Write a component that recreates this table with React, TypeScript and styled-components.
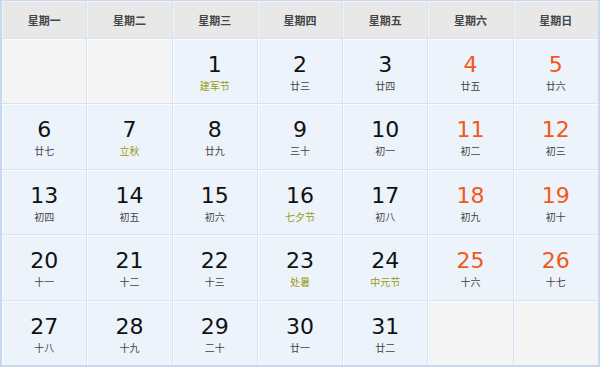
import React from "react";
import styled, { createGlobalStyle } from "styled-components";

const Global = createGlobalStyle`
  html, body { margin: 0; padding: 0; background: #fff; }
  body { font-family: "DejaVu Sans", "Noto Sans CJK SC", sans-serif; }
`;

const Frame = styled.div`
  width: 600px;
  height: 367px;
  box-sizing: border-box;
  border: 2px solid #c6d9f1;
  border-top-width: 1px;
  display: grid;
  grid-template-columns: repeat(7, 1fr);
  grid-template-rows: 37px repeat(5, 1fr);
  background: #d6e3f3;
  gap: 1px;
`;

const Head = styled.div`
  background: #e8e8e8;
  box-shadow: inset 1px 1px 0 #f3f3f3;
  display: flex;
  align-items: center;
  justify-content: center;
  font-family: "Noto Sans CJK SC", sans-serif;
  font-weight: 700;
  font-size: 11px;
  color: #444;
`;

const Cell = styled.div<{ $empty?: boolean }>`
  background: ${(p) => (p.$empty ? "#f4f4f4" : "#ecf3fb")};
  box-shadow: inset 1px 1px 0 #f8fbff;
  display: flex;
  flex-direction: column;
  align-items: center;
  padding-top: 13px;
  box-sizing: border-box;
`;

const Num = styled.div<{ $weekend?: boolean }>`
  font-family: "DejaVu Sans", sans-serif;
  font-size: 22px;
  line-height: 26px;
  color: ${(p) => (p.$weekend ? "#f2581a" : "#111")};
`;

const Lunar = styled.div<{ $fest?: boolean }>`
  font-family: "Noto Sans CJK SC", sans-serif;
  font-size: 10px;
  line-height: 14px;
  margin-top: 1px;
  color: ${(p) => (p.$fest ? "#9a9a10" : "#444")};
`;

const heads = ["星期一", "星期二", "星期三", "星期四", "星期五", "星期六", "星期日"];

type D = { n: number; l: string; f?: boolean } | null;

const days: D[] = [
  null,
  null,
  { n: 1, l: "建军节", f: true },
  { n: 2, l: "廿三" },
  { n: 3, l: "廿四" },
  { n: 4, l: "廿五" },
  { n: 5, l: "廿六" },
  { n: 6, l: "廿七" },
  { n: 7, l: "立秋", f: true },
  { n: 8, l: "廿九" },
  { n: 9, l: "三十" },
  { n: 10, l: "初一" },
  { n: 11, l: "初二" },
  { n: 12, l: "初三" },
  { n: 13, l: "初四" },
  { n: 14, l: "初五" },
  { n: 15, l: "初六" },
  { n: 16, l: "七夕节", f: true },
  { n: 17, l: "初八" },
  { n: 18, l: "初九" },
  { n: 19, l: "初十" },
  { n: 20, l: "十一" },
  { n: 21, l: "十二" },
  { n: 22, l: "十三" },
  { n: 23, l: "处暑", f: true },
  { n: 24, l: "中元节", f: true },
  { n: 25, l: "十六" },
  { n: 26, l: "十七" },
  { n: 27, l: "十八" },
  { n: 28, l: "十九" },
  { n: 29, l: "二十" },
  { n: 30, l: "廿一" },
  { n: 31, l: "廿二" },
  null,
  null,
];

export default function App() {
  return (
    <>
      <Global />
      <Frame>
        {heads.map((h) => (
          <Head key={h}>{h}</Head>
        ))}
        {days.map((d, i) =>
          d ? (
            <Cell key={i}>
              <Num $weekend={i % 7 >= 5}>{d.n}</Num>
              <Lunar $fest={d.f}>{d.l}</Lunar>
            </Cell>
          ) : (
            <Cell key={i} $empty />
          )
        )}
      </Frame>
    </>
  );
}
